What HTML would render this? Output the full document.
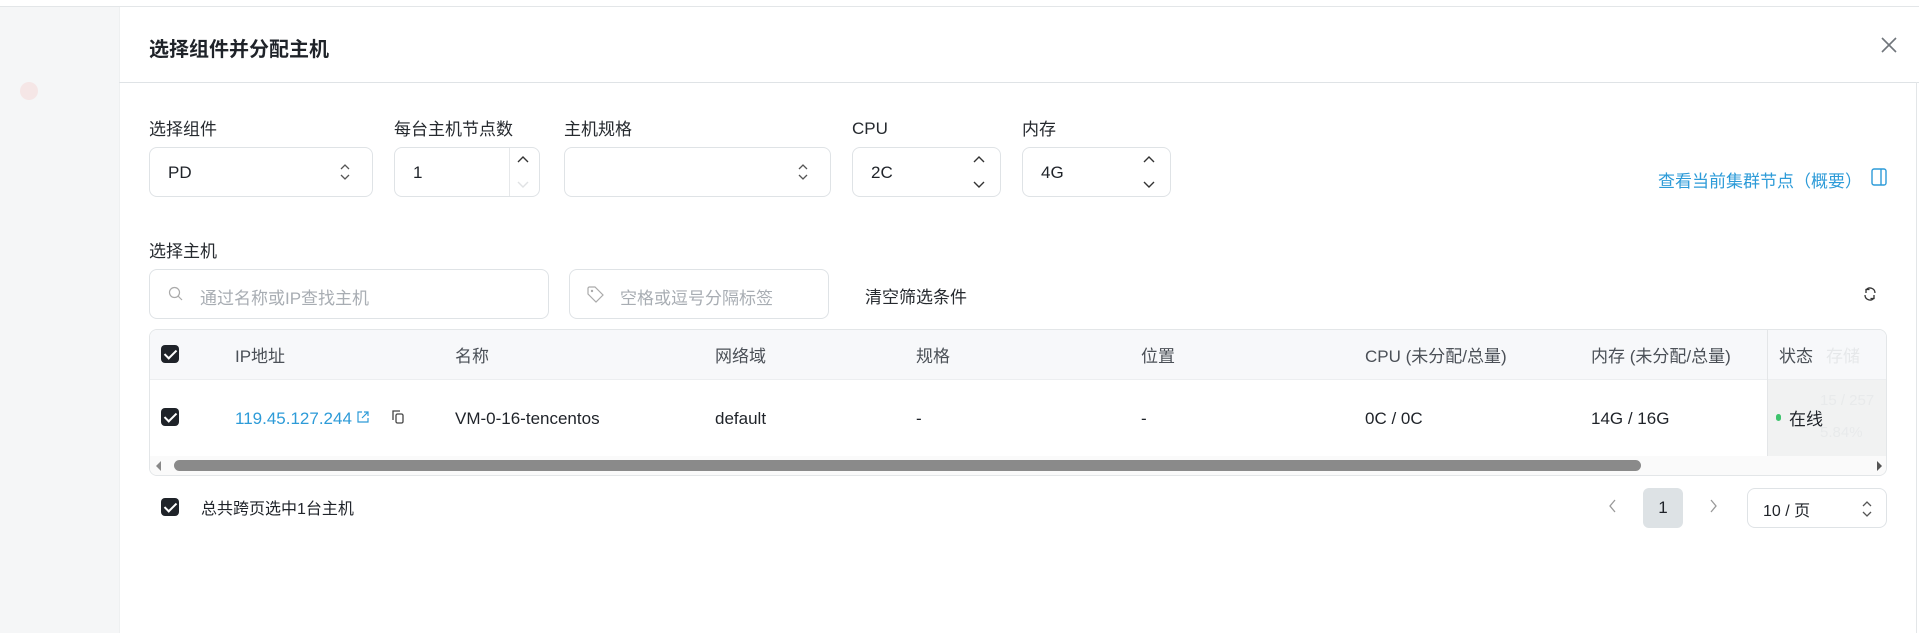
<!DOCTYPE html>
<html><head><meta charset="utf-8"><style>
*{box-sizing:border-box;margin:0;padding:0}
body{width:1919px;height:633px;overflow:hidden;background:#fff;font-family:"Liberation Sans","Noto Sans CJK SC",sans-serif;font-size:17px;color:#1f2329;position:relative}
.a{position:absolute}
.side{left:0;top:7px;width:119px;height:626px;background:#f5f6f7}
.box{position:absolute;border:1px solid #dfe3e6;border-radius:8px;background:#fff}
.lbl{position:absolute;font-size:17px;color:#262a2f}
.ph{color:#a8adb3}
.cb{position:absolute;width:18px;height:18px;background:#1f2329;border-radius:4px}
.cb:after{content:"";position:absolute;left:6px;top:2px;width:5px;height:10px;border:solid #fff;border-width:0 2px 2px 0;transform:rotate(45deg)}
.th{position:absolute;top:342px;color:#4b5057}
.td{position:absolute;top:409px}
</style></head><body>
<div class="a" style="left:0;top:6px;width:1919px;height:1px;background:#e3e6e8"></div>
<div class="a side"></div>
<div class="a" style="left:20px;top:82px;width:18px;height:18px;border-radius:50%;background:#f5e6e6"></div>
<div class="a" style="left:119px;top:7px;width:1800px;height:626px;background:#fff;border-left:1px solid #eef0f1"></div>
<div class="a" style="left:149px;top:33px;font-size:20px;font-weight:bold;color:#1f2329">选择组件并分配主机</div>
<svg class="a" style="left:1880px;top:36px" width="18" height="18" viewBox="0 0 18 18"><path d="M2 2L16 16M16 2L2 16" stroke="#70757b" stroke-width="1.6"/></svg>
<div class="a" style="left:119px;top:82px;width:1800px;height:1px;background:#dfe3e6"></div>
<div class="a" style="left:1916px;top:82px;width:1px;height:551px;background:#e3e6e8"></div>

<div class="lbl" style="left:149px;top:115px">选择组件</div>
<div class="lbl" style="left:394px;top:115px">每台主机节点数</div>
<div class="lbl" style="left:564px;top:115px">主机规格</div>
<div class="lbl" style="left:852px;top:119px">CPU</div>
<div class="lbl" style="left:1022px;top:115px">内存</div>

<div class="box" style="left:149px;top:147px;width:224px;height:50px"><span class="a" style="left:18px;top:15px">PD</span>
<svg class="a" style="left:189px;top:14px" width="12" height="20" viewBox="0 0 12 20"><path d="M2 7L6 3L10 7M2 13L6 17L10 13" stroke="#555" fill="none" stroke-width="1.3"/></svg></div>
<div class="box" style="left:394px;top:147px;width:146px;height:50px"><span class="a" style="left:18px;top:15px">1</span>
<div class="a" style="left:114px;top:0;width:1px;height:48px;background:#e6e8ea"></div>
<svg class="a" style="left:120px;top:4px" width="16" height="40" viewBox="0 0 16 40"><path d="M3 10L8 5L13 10" stroke="#333" fill="none" stroke-width="1.4"/><path d="M3 30L8 35L13 30" stroke="#e0e2e4" fill="none" stroke-width="1.4"/></svg></div>
<div class="box" style="left:564px;top:147px;width:267px;height:50px">
<svg class="a" style="left:232px;top:14px" width="12" height="20" viewBox="0 0 12 20"><path d="M2 7L6 3L10 7M2 13L6 17L10 13" stroke="#555" fill="none" stroke-width="1.3"/></svg></div>
<div class="box" style="left:852px;top:147px;width:149px;height:50px"><span class="a" style="left:18px;top:15px">2C</span>
<svg class="a" style="left:118px;top:4px" width="16" height="40" viewBox="0 0 16 40"><path d="M3 10L8 5L13 10M3 30L8 35L13 30" stroke="#333" fill="none" stroke-width="1.4"/></svg></div>
<div class="box" style="left:1022px;top:147px;width:149px;height:50px"><span class="a" style="left:18px;top:15px">4G</span>
<svg class="a" style="left:118px;top:4px" width="16" height="40" viewBox="0 0 16 40"><path d="M3 10L8 5L13 10M3 30L8 35L13 30" stroke="#333" fill="none" stroke-width="1.4"/></svg></div>

<div class="a" style="left:1658px;top:167px;color:#2d9bd8">查看当前集群节点（概要）</div>
<svg class="a" style="left:1871px;top:168px" width="16" height="18" viewBox="0 0 16 18"><rect x="1" y="1" width="14" height="16" rx="2" stroke="#2d9bd8" fill="none" stroke-width="1.4"/><path d="M10 1V17" stroke="#2d9bd8" stroke-width="1.4"/></svg>

<div class="lbl" style="left:149px;top:237px">选择主机</div>
<div class="box" style="left:149px;top:269px;width:400px;height:50px">
<svg class="a" style="left:18px;top:16px" width="16" height="16" viewBox="0 0 16 16"><circle cx="6.5" cy="6.5" r="5" stroke="#aaa" fill="none" stroke-width="1.2"/><path d="M10 10L14 14" stroke="#aaa" stroke-width="1.2"/></svg>
<span class="a ph" style="left:50px;top:14px">通过名称或IP查找主机</span></div>
<div class="box" style="left:569px;top:269px;width:260px;height:50px">
<svg class="a" style="left:16px;top:15px" width="18" height="18" viewBox="0 0 18 18"><path d="M2 3V9L10 17L17 10L9 2H3Z" stroke="#aaa" fill="none" stroke-width="1.2"/><circle cx="6" cy="6" r="1.2" fill="#aaa"/></svg>
<span class="a ph" style="left:50px;top:14px">空格或逗号分隔标签</span></div>
<div class="a" style="left:865px;top:283px;color:#262a2f">清空筛选条件</div>
<svg class="a" style="left:1862px;top:286px" width="16" height="16" viewBox="0 0 16 16"><path d="M3 9A5 5 0 0 0 12 12M13 7A5 5 0 0 0 4 4" stroke="#333" fill="none" stroke-width="1.3"/><path d="M12 9V12.5H8.5M4 7V3.5H7.5" stroke="#333" fill="none" stroke-width="1.3"/></svg>

<div class="a" style="left:149px;top:329px;width:1738px;height:147px;border:1px solid #e3e6e8;border-radius:8px;overflow:hidden">
<div class="a" style="left:0;top:0;width:1738px;height:50px;background:#f7f8fa;border-bottom:1px solid #eceef0"></div>
<div class="a" style="left:1617px;top:0;width:121px;height:126px;border-left:1px solid #e4e6e8"></div>
<div class="a" style="left:1618px;top:50px;width:120px;height:76px;background:#f1f2f2"></div>
<div class="a" style="left:0;top:126px;width:1738px;height:20px;background:#fafafa"></div>
<div class="a" style="left:24px;top:130px;width:1467px;height:11px;border-radius:6px;background:#8a8a8a"></div>
<svg class="a" style="left:5px;top:130px" width="8" height="12"><path d="M6 1L1 6L6 11Z" fill="#888"/></svg>
<svg class="a" style="left:1725px;top:130px" width="8" height="12"><path d="M2 1L7 6L2 11Z" fill="#555"/></svg>
</div>
<div class="cb" style="left:161px;top:345px"></div>
<div class="th" style="left:235px">IP地址</div>
<div class="th" style="left:455px">名称</div>
<div class="th" style="left:715px">网络域</div>
<div class="th" style="left:916px">规格</div>
<div class="th" style="left:1141px">位置</div>
<div class="th" style="left:1365px">CPU (未分配/总量)</div>
<div class="th" style="left:1591px">内存 (未分配/总量)</div>
<div class="th" style="left:1779px">状态</div>
<div class="th" style="left:1826px;color:#e6e8ea">存储</div>

<div class="cb" style="left:161px;top:408px"></div>
<div class="td" style="left:235px;color:#2d9bd8">119.45.127.244</div>
<svg class="a" style="left:356px;top:410px" width="14" height="14" viewBox="0 0 14 14"><path d="M6 2H2V12H12V8M8 2H12V6M12 2L6 8" stroke="#2d9bd8" fill="none" stroke-width="1.2"/></svg>
<svg class="a" style="left:390px;top:409px" width="16" height="16" viewBox="0 0 16 16"><path d="M3 11V2H10" stroke="#444" fill="none" stroke-width="1.3"/><rect x="6" y="5" width="7" height="9" rx="1.5" stroke="#444" fill="none" stroke-width="1.3"/></svg>
<div class="td" style="left:455px">VM-0-16-tencentos</div>
<div class="td" style="left:715px">default</div>
<div class="td" style="left:916px">-</div>
<div class="td" style="left:1141px">-</div>
<div class="td" style="left:1365px">0C / 0C</div>
<div class="td" style="left:1591px">14G / 16G</div>
<div class="a" style="left:1776px;top:414px;width:5px;height:7px;border-radius:3px;background:#3ec46d"></div>
<div class="a" style="left:1789px;top:405px">在线</div>
<div class="a" style="left:1820px;top:392px;color:#e8eaeb;font-size:15px">15 / 257</div>
<div class="a" style="left:1820px;top:424px;color:#e8eaeb;font-size:15px">5.84%</div>

<div class="cb" style="left:161px;top:498px"></div>
<div class="a" style="left:201px;top:495px;font-size:16px">总共跨页选中1台主机</div>
<svg class="a" style="left:1608px;top:498px" width="10" height="16"><path d="M7 2L2 8L7 14" stroke="#999" fill="none" stroke-width="1.3"/></svg>
<div class="a" style="left:1643px;top:488px;width:40px;height:40px;border-radius:6px;background:#dde2e5;text-align:center;line-height:40px">1</div>
<svg class="a" style="left:1708px;top:498px" width="10" height="16"><path d="M3 2L8 8L3 14" stroke="#999" fill="none" stroke-width="1.3"/></svg>
<div class="box" style="left:1747px;top:488px;width:140px;height:40px"><span class="a" style="left:15px;top:8px;font-size:16px">10 / 页</span>
<svg class="a" style="left:113px;top:10px" width="12" height="20" viewBox="0 0 12 20"><path d="M2 7L6 3L10 7M2 13L6 17L10 13" stroke="#555" fill="none" stroke-width="1.3"/></svg></div>
</body></html>
